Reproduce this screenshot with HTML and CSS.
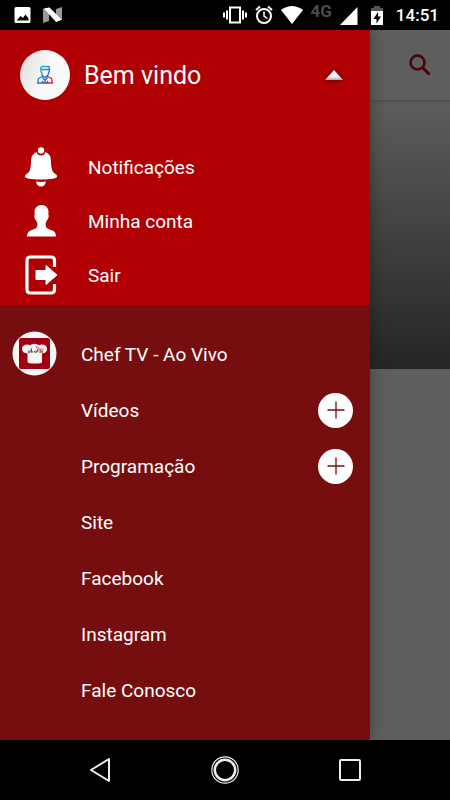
FILE: index.html
```html
<!DOCTYPE html>
<html lang="pt-BR">
<head>
<meta charset="utf-8">
<meta name="viewport" content="width=device-width, initial-scale=1">
<title>Chef TV</title>
<link rel="stylesheet" href="styles.css">
</head>
<body>
<header class="status">
  <svg class="status-icon" width="18" height="18" viewBox="0 0 18 18"><path fill="#fff" fill-rule="evenodd" d="M2 1h13q1.500 0 1.500 1.500v13q0 1.500-1.500 1.500H2Q.5 17 .5 15.500v-13Q.5 1 2 1zM2.500 14.500h12v-2l-3-4-2.500 3.500-2.500-2z"/></svg>
  <svg class="status-icon" width="20" height="18" viewBox="0 0 20 18"><path fill="#999" d="M0 3l6-1.500V15l-6 2zM13 3l6-2v13l-6 2z"/><path fill="#fff" d="M1 2.500L6.500 1.500 18.500 13.500 13 16z"/></svg>
  <span class="spacer"></span>
  <svg width="24" height="18" viewBox="0 0 24 18"><path d="M7 1.500h10v15H7zM4 4.500v9M1 6.500v5M20 4.500v9M23 6.500v5" fill="none" stroke="#fff" stroke-width="2"/></svg>
  <svg width="18" height="20" viewBox="0 0 18 20" fill="none" stroke="#fff"><circle cx="9" cy="11" r="7" stroke-width="2"/><path d="M9 6.500V11l3.500 2.500" stroke-width="1.500"/><path d="M1 5l4-3.500M17 5l-4-3.500" stroke-width="2"/></svg>
  <svg width="22" height="18" viewBox="0 0 22 18"><path fill="#fff" d="M0 4Q11-4 22 4L11 18z"/></svg>
  <span class="network">4G</span>
  <svg width="18" height="20" viewBox="0 0 18 20"><path fill="#fff" d="M17.500 2v18H0z"/></svg>
  <svg width="22" height="20" viewBox="0 0 22 20"><path fill="#555" d="M5 3h3V1h6v2h3v4H5z"/><path fill="#fff" d="M5 6h12v14H5z"/><path fill="#000" d="M12 7L7.500 14h3v4.500l4.500-7h-3z"/></svg>
  <time>14:51</time>
</header>

<main class="screen">
  <div class="toolbar">
    <button class="search" aria-label="Buscar"><svg width="24" height="24" viewBox="0 0 24 24" fill="none" stroke="#4b0003" stroke-width="2.500"><circle cx="9.500" cy="9.500" r="7"/><path d="M14.500 14.500l7 7" stroke-width="3"/></svg></button>
  </div>
  <div class="player"></div>

  <aside class="drawer">
    <section class="account">
      <div class="welcome">
        <svg class="avatar" width="50" height="50" viewBox="0 0 50 50">
          <defs>
            <linearGradient id="disc" x1="0" y1="0" x2="1" y2=".4"><stop stop-color="#ddd"/><stop offset=".65" stop-color="#fafafa"/></linearGradient>
            <linearGradient id="person" gradientUnits="userSpaceOnUse" x1="17" y1="20" x2="33" y2="32"><stop stop-color="#10c4d8"/><stop offset=".6" stop-color="#246cc0"/><stop offset=".85" stop-color="#e51c38"/></linearGradient>
          </defs>
          <circle cx="25" cy="25" r="25" fill="url(#disc)"/>
          <path fill="none" stroke="url(#person)" stroke-width="1.300" d="M21 21l-.5-3 2-1.500 6.500.2.500 1.800-.5 3.500-1.300 3.500-2.700 2-2.700-2zM21 19.500h8M22.500 26.500l-4 2-1 4.500h15l-1-4.500-4-2M22.500 27.500l2.500 3 2.500-3M25 30v3M22 31l1.500 2M28 31l-1.500 2"/>
        </svg>
        <h1>Bem vindo</h1>
        <button class="collapse" aria-label="Recolher"><svg width="22" height="14" viewBox="0 0 22 14"><defs><linearGradient id="arrow" x1="0" y1="0" x2="0" y2="1"><stop offset=".6" stop-color="#fff"/><stop offset="1" stop-color="#aaa"/></linearGradient></defs><path fill="url(#arrow)" d="M11 2l9 10H2z"/></svg></button>
      </div>
      <nav class="account-links">
        <a href="#"><svg width="34" height="40" viewBox="0 0 34 40" fill="#fff"><circle cx="17" cy="3.500" r="3.200"/><path d="M12.500 5q1 3.500 4.500 3.500T21.500 5Q27 7.500 27 14q0 9 2.500 11.500 3.500 2 3.500 4 0 3-16 3T1 29.500q0-2 3.500-4Q7 23 7 14q0-6.500 5.500-9zM12 34.500q5 .8 10 0-1 5-5 5t-5-5z"/></svg>Notificações</a>
        <a href="#"><svg width="34" height="34" viewBox="0 0 34 34" fill="#fff"><path d="M10.500 9q0-8 7-8t7 8l-.3 1.500q1 .5.300 3t-1.500 2.500L21.500 20q0 3 2 4.500l5 2q3.500 1.500 3.500 6H3q0-4.500 3.500-6l5-2q2-1.500 2-4.500L12 16q-1 0-1.500-2.500t.3-3z"/></svg>Minha conta</a>
        <a href="#"><svg width="34" height="40" viewBox="0 0 34 40"><path fill="none" stroke="#fff" stroke-width="3.200" d="M30.500 12V5.500q0-3.500-3.500-3.500H6.500Q3 2 3 5.500v29Q3 38 6.500 38H27q3.500 0 3.500-3.500V29"/><path fill="#fff" stroke="#fff" stroke-width="1" stroke-linejoin="round" d="M12 15.500h10v-5l11 9.500-11 9.500v-5H12z"/></svg>Sair</a>
      </nav>
    </section>
    <nav class="sections">
      <div class="row"><svg class="badge" width="46" height="46" viewBox="0 0 46 46"><circle cx="22.500" cy="22.500" r="22" fill="#f7f8f5"/><rect x="7" y="7" width="31" height="31" rx="2" fill="#a10013"/><path fill="#f5f6f1" d="M15.500 31v-8.500Q10 22 10 18q0-4.500 5.500-4.500 1.500 0 2.500.8 1.500-1.500 4.500-1.500t4.500 1.500q1-.8 2.500-.8 5.500 0 5.500 4.500 0 4-5 4.500V31q0 1.500-7 1.500T15.500 31z"/><path fill="none" stroke="#333" stroke-width=".7" d="M18 20q-2-.5-2 1t2.500 0l1-3.500v4q1-2 1.500 0l1-1q2-1 1 0t1.500 1l2-5M24 20h3"/><path fill="none" stroke="#cf2433" stroke-width=".7" d="M23.500 17q3-3 1 0M26.500 18h5M28 18v4l1-3 1 3 1-3"/></svg><a href="#">Chef TV - Ao Vivo</a></div>
      <div class="row"><a href="#">Vídeos</a><button class="expand" aria-label="Expandir Vídeos"><svg width="18" height="18" viewBox="0 0 18 18"><path d="M9 .500v17M.500 9h17" stroke="#740d10" stroke-width="1.300"/></svg></button></div>
      <div class="row"><a href="#">Programação</a><button class="expand" aria-label="Expandir Programação"><svg width="18" height="18" viewBox="0 0 18 18"><path d="M9 .500v17M.500 9h17" stroke="#740d10" stroke-width="1.300"/></svg></button></div>
      <div class="row"><a href="#">Site</a></div>
      <div class="row"><a href="#">Facebook</a></div>
      <div class="row"><a href="#">Instagram</a></div>
      <div class="row"><a href="#">Fale Conosco</a></div>
    </nav>
  </aside>
</main>

<footer class="system">
  <button aria-label="Voltar"><svg width="30" height="30" viewBox="0 0 30 30" fill="none" stroke="#eee" stroke-width="2" stroke-linejoin="round"><path d="M24 4v22L6 15z"/></svg></button>
  <button aria-label="Início"><svg width="30" height="30" viewBox="0 0 30 30" fill="none" stroke="#eee"><circle cx="15" cy="15" r="13.200" stroke-width="1.200"/><circle cx="15" cy="15" r="10.200" stroke-width="2.500"/></svg></button>
  <button aria-label="Recentes"><svg width="30" height="30" viewBox="0 0 30 30" fill="none" stroke="#eee" stroke-width="2"><rect x="5" y="5" width="20" height="20" rx="1"/></svg></button>
</footer>
</body>
</html>
```
FILE: styles.css
```css
* { box-sizing: border-box; }

body {
  margin: 0;
  min-height: 100vh;
  display: flex;
  flex-direction: column;
  background: #000;
  color: #fff;
  font-family: Roboto, sans-serif;
}

svg { display: block; flex: none; }
a { color: inherit; text-decoration: none; }

button {
  display: grid;
  place-items: center;
  padding: 0;
  border: 0;
  background: none;
}

.status {
  height: 30px;
  padding: 0 11px 0 14px;
  display: flex;
  align-items: center;
  gap: 8px;
  font-size: 17px;
  font-weight: 500;
}
.status-icon { margin-right: 3px; }
.spacer { flex: 1; }
.network {
  align-self: flex-start;
  padding-top: 1px;
  font-weight: 700;
  line-height: 20px;
  color: #4c4c4c;
}

.screen {
  position: relative;
  flex: 1;
  background: #5e5e5e;
}
.toolbar {
  height: 71px;
  padding-right: 18px;
  display: flex;
  align-items: center;
  justify-content: flex-end;
  border-bottom: 1px solid #4d4d4d;
}
.player {
  height: 268px;
  background: linear-gradient(#565656, #5c5c5c 4px, #252525);
}

.drawer {
  position: absolute;
  top: 0;
  bottom: 0;
  left: 0;
  right: 80px;
  background: #760e10;
  box-shadow: 0 0 14px rgba(0, 0, 0, 0.35);
  clip-path: inset(0 -20px 0 0);
}

.account {
  padding-bottom: 4px;
  background: #b10004;
  box-shadow: inset 0 -1px #930609;
}
.welcome {
  height: 110px;
  padding: 0 25px 20px 20px;
  display: flex;
  align-items: center;
  gap: 14px;
}
h1 {
  margin: 0;
  flex: 1;
  font-size: 25px;
  font-weight: 400;
}
.collapse svg { filter: drop-shadow(0 0 2px rgba(0, 0, 0, 0.6)); }

.account-links a {
  height: 54px;
  padding-left: 24px;
  display: flex;
  align-items: center;
  gap: 30px;
  font-size: 19px;
}

.sections {
  padding: 20px 17px 20px 12px;
  display: grid;
  font-size: 19px;
}
.row {
  height: 56px;
  display: grid;
  grid-template-columns: 46px 1fr auto;
  column-gap: 23px;
  align-items: center;
}
.row a { grid-column: 2; }
.badge { grid-column: 1; }
.expand {
  width: 35px;
  height: 35px;
  border-radius: 50%;
  background: #fff;
}

.system {
  height: 60px;
  padding: 0 37px;
  display: flex;
  align-items: center;
  justify-content: space-around;
}
```
